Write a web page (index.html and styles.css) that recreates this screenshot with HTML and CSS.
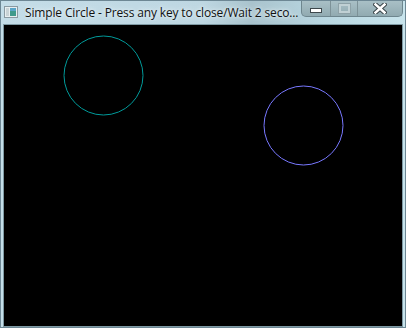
FILE: index.html
```html
<!DOCTYPE html>
<html lang="en">
<head>
    <meta charset="UTF-8">
    <title>Simple Circle</title>
    <link rel="stylesheet" href="styles.css">
</head>
<body>
    <div class="window">
        <div class="titlebar">
            <svg class="app-icon" width="14" height="12" viewBox="0 0 14 12">
                <rect x="0.5" y="0.5" width="13" height="11" fill="#e8eef0" stroke="#8a9aa2"/>
                <rect x="2" y="2" width="3" height="8" fill="#c9d3d6"/>
                <rect x="6" y="2" width="6" height="8" fill="#3f9a8c"/>
                <rect x="6" y="2" width="6" height="3" fill="#5aa6c8"/>
            </svg>
            <span class="title">Simple Circle - Press any key to close/Wait 2 seco...</span>
            <div class="caption-buttons">
                <div class="cbtn cbtn-min"><span class="min-bar"></span></div>
                <div class="cbtn cbtn-max"><span class="max-box"></span></div>
                <div class="cbtn cbtn-close">
                    <svg width="14" height="11" viewBox="0 0 14 11">
                        <path d="M2.5 1.5 L11.5 9.5 M11.5 1.5 L2.5 9.5" stroke="#3a4448" stroke-width="4.5" stroke-linecap="square"/>
                        <path d="M2.5 1.5 L11.5 9.5 M11.5 1.5 L2.5 9.5" stroke="#ffffff" stroke-width="2.5" stroke-linecap="square"/>
                    </svg>
                </div>
            </div>
        </div>
        <div class="client">
            <svg class="canvas" width="400" height="301" viewBox="0 0 400 301">
                <circle cx="99.5" cy="50.5" r="39.5" fill="none" stroke="#009a9a" stroke-width="1"/>
                <circle cx="299.5" cy="100.5" r="39.5" fill="none" stroke="#7878ff" stroke-width="1"/>
            </svg>
        </div>
    </div>
</body>
</html>
```
FILE: styles.css
```css
body {
    margin: 0;
    width: 406px;
    height: 328px;
    overflow: hidden;
}
.window {
    width: 406px;
    height: 328px;
    display: flex;
    flex-direction: column;
    background: linear-gradient(90deg, #c4dde8 0%, #bed7e2 50%, #a9c3cd 62%, #b9d7e1 80%, #c8e4ec 100%);
    box-sizing: border-box;
    border: 1px solid #6d8794;
}
.titlebar {
    height: 22px;
    display: flex;
    align-items: flex-start;
}
.app-icon {
    flex-shrink: 0;
    margin: 5px 0 0 3px;
}
.title {
    margin: 3px 0 0 7px;
    font: 12px "Open Sans", "DejaVu Sans", sans-serif;
    letter-spacing: -0.15px;
    color: #111;
    white-space: nowrap;
    overflow: hidden;
    min-width: 0;
    text-shadow: 0 0 6px #e8f2f6, 0 0 3px #e8f2f6;
}
.caption-buttons {
    flex-shrink: 0;
    margin-left: auto;
    margin-right: 2px;
    display: flex;
    height: 15px;
    border: 1px solid #6e868e;
    border-top: none;
    border-radius: 0 0 5px 5px;
    background: linear-gradient(180deg, #a9c0c6, #91aab1);
    overflow: hidden;
}
.cbtn {
    flex-shrink: 0;
    display: flex;
    align-items: center;
    justify-content: center;
}
.cbtn-min {
    width: 28px;
    border-right: 1px solid #7d9298;
}
.cbtn-max {
    width: 26px;
    border-right: 1px solid #7d9298;
}
.cbtn-close {
    width: 44px;
}
.min-bar {
    width: 10px;
    height: 3px;
    margin-top: 4px;
    background: #fff;
    border: 1px solid #3e484c;
}
.max-box {
    width: 7px;
    height: 5px;
    border: 2px solid #c0d0d4;
    outline: 1px solid #8ea2a8;
}
.client {
    margin: 1px 2px 0 2px;
    height: 301px;
    border: 1px solid #7f9aa4;
    background: #000;
}
.canvas {
    display: block;
}
```
